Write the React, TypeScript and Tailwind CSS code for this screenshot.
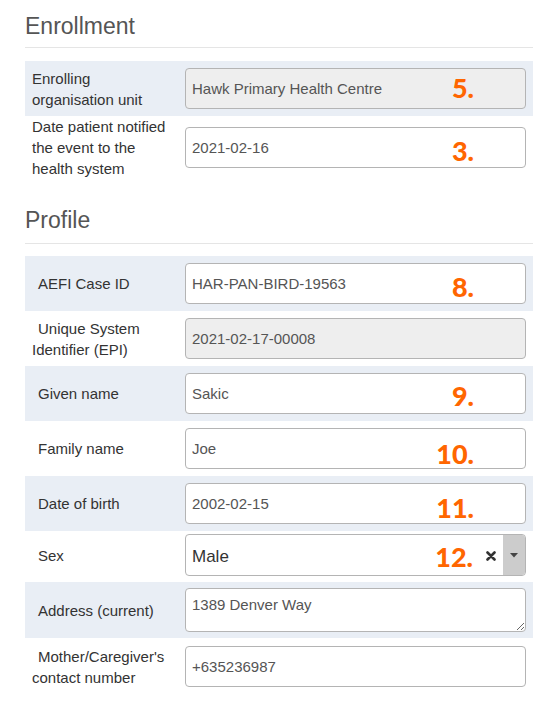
import type { ReactNode } from 'react'

type FieldRow = {
  label: ReactNode
  value: string
  num?: string
  numTop?: number
  disabled?: boolean
  shaded?: boolean
  indent?: boolean
}

const NumTag = ({ text, top }: { text: string; top: number }) => (
  <span
    className="pointer-events-none absolute right-[52px] font-['Lato',sans-serif] text-[27px] leading-none font-black text-[#ff6600]"
    style={{ top }}
  >
    {text}
  </span>
)

const Heading = ({ title, className }: { title: string; className: string }) => (
  <div className={`border-b border-[#e5e5e5] ${className}`}>
    <h2 className="text-[23px] leading-[26px] text-[#555]">{title}</h2>
  </div>
)

const Label = ({ children, indent }: { children: ReactNode; indent?: boolean }) => (
  <div className={`w-[160px] shrink-0 pl-[7px] pr-[8px] text-[15px] leading-[21px] text-[#333] ${indent ? 'indent-[6px]' : ''}`}>
    {children}
  </div>
)

const Row = ({ row }: { row: FieldRow }) => (
  <div className={`flex items-center pr-[7px] ${row.shaded ? 'bg-[#e9eef5]' : ''}`}>
    <Label indent={row.indent}>{row.label}</Label>
    <div className="relative flex-1 py-[7px]">
      <div className="relative">
        <input
          readOnly
          value={row.value}
          className={`block h-[41px] w-full rounded-[4px] border border-[#b4b4b4] px-[6px] text-[15px] text-[#555] outline-none ${
            row.disabled ? 'bg-[#eeeeee]' : 'bg-white'
          }`}
        />
        {row.num && <NumTag text={row.num} top={row.numTop ?? 8} />}
      </div>
    </div>
  </div>
)

const enrollment: FieldRow[] = [
  {
    label: (
      <>
        Enrolling
        <br />
        organisation unit
      </>
    ),
    value: 'Hawk Primary Health Centre',
    num: '5.',
    numTop: 6,
    disabled: true,
    shaded: true,
  },
]

const profileTop: FieldRow[] = [
  { label: 'AEFI Case ID', value: 'HAR-PAN-BIRD-19563', num: '8.', numTop: 10, shaded: true, indent: true },
  {
    label: (
      <>
        Unique System
        <br />
        Identifier (EPI)
      </>
    ),
    value: '2021-02-17-00008',
    disabled: true,
    indent: true,
  },
  { label: 'Given name', value: 'Sakic', num: '9.', numTop: 9, shaded: true, indent: true },
  { label: 'Family name', value: 'Joe', num: '10.', numTop: 12, indent: true },
  { label: 'Date of birth', value: '2002-02-15', num: '11.', numTop: 11, shaded: true, indent: true },
]

export default function App() {
  return (
    <div className="h-[713px] w-[541px] overflow-hidden bg-white font-['Liberation_Sans',Arial,sans-serif]">
      <div className="pl-[25px] pr-[8px]">
        <Heading title="Enrollment" className="mt-[13px] pb-[8px]" />

        <div className="mt-[13px]">
          {enrollment.map((row, i) => (
            <Row key={i} row={row} />
          ))}

          <div className="flex items-center pr-[7px]">
            <Label>
              Date patient notified
              <br />
              the event to the
              <br />
              health system
            </Label>
            <div className="relative flex-1">
              <input
                readOnly
                value="2021-02-16"
                className="block h-[41px] w-full rounded-[4px] border border-[#b4b4b4] bg-white px-[6px] text-[15px] text-[#555] outline-none"
              />
              <NumTag text="3." top={10} />
            </div>
          </div>
        </div>

        <Heading title="Profile" className="mt-[28px] pb-[10px]" />

        <div className="mt-[12px]">
          {profileTop.map((row, i) => (
            <Row key={i} row={row} />
          ))}

          {/* select2 style dropdown */}
          <div className="flex items-center pt-[3px] pb-[6px] pr-[7px]">
            <Label indent>Sex</Label>
            <div className="relative flex h-[42px] flex-1 items-center overflow-hidden rounded-[4px] border border-[#b4b4b4] bg-white">
              <span className="flex-1 pl-[6px] pt-[3px] text-[17px] text-[#333]">Male</span>
              <NumTag text="12." top={8} />
              <svg width="10" height="10" viewBox="0 0 10 10" className="mr-[7px] mt-[2px]">
                <path d="M1.5 1.5 L8.5 8.5 M8.5 1.5 L1.5 8.5" stroke="#333" strokeWidth="2.6" strokeLinecap="round" />
              </svg>
              <div className="flex h-full w-[22px] items-center justify-center bg-[#cccccc]">
                <svg width="8" height="5" viewBox="0 0 8 5">
                  <path d="M0 0 L8 0 L4 4.5 Z" fill="#444" />
                </svg>
              </div>
            </div>
          </div>

          <div className="flex items-center bg-[#e9eef5] py-[6px] pr-[7px]">
            <Label indent>Address (current)</Label>
            <textarea
              readOnly
              defaultValue="1389 Denver Way"
              className="block h-[44px] flex-1 rounded-[4px] border border-[#b4b4b4] bg-white px-[6px] py-[6px] text-[15px] leading-[20px] text-[#555] outline-none"
            />
          </div>

          <div className="pt-px">
            <Row
              row={{
                label: (
                  <>
                    Mother/Caregiver's
                    <br />
                    contact number
                  </>
                ),
                value: '+635236987',
                indent: true,
              }}
            />
          </div>
        </div>
      </div>
    </div>
  )
}
